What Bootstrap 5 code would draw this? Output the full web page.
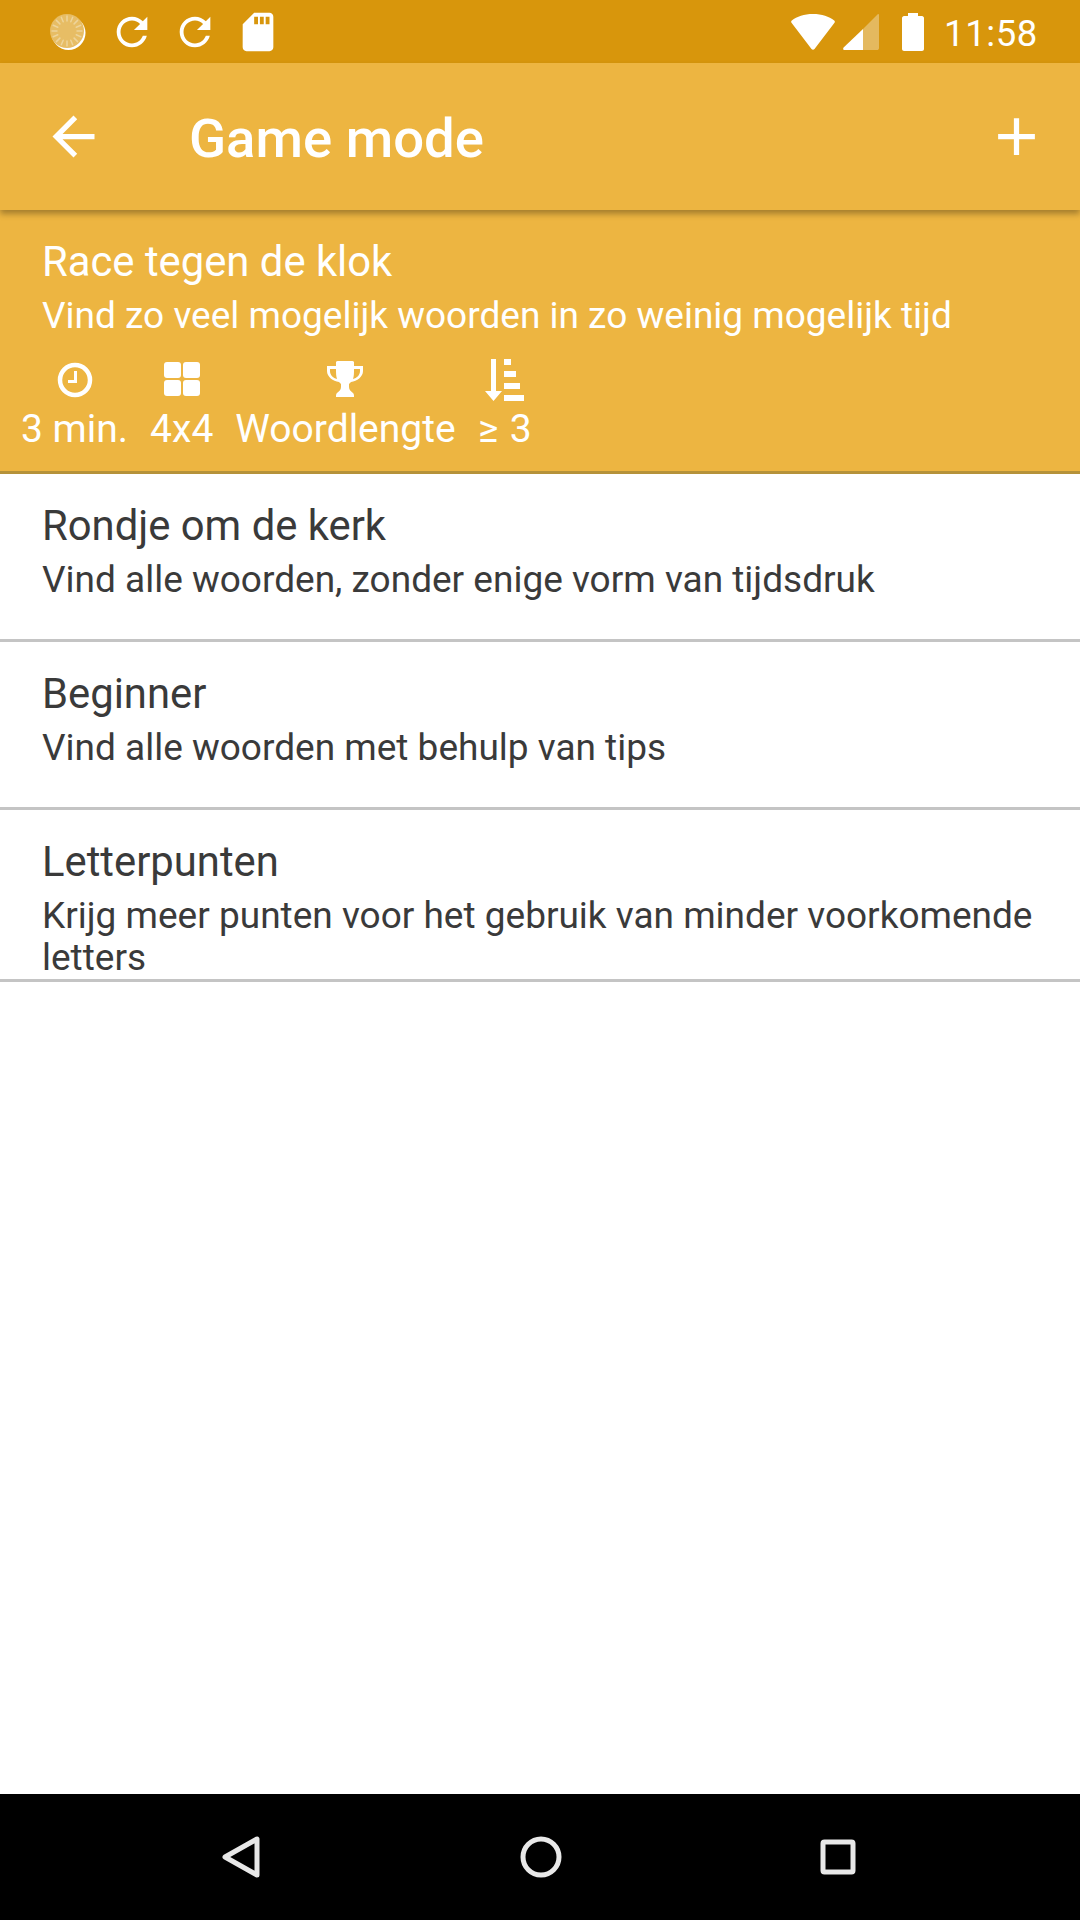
<!DOCTYPE html>
<html lang="en">
<head>
<meta charset="UTF-8" />
<title>Game mode</title>
<link href="https://cdn.jsdelivr.net/npm/bootstrap@5.3.0/dist/css/bootstrap.min.css" rel="stylesheet" />
<style>
  html, body { height: 100%; }
  body { font-family: Roboto, "Liberation Sans", sans-serif; background: #fff; color: #3a3a3a; }
  .screen { height: 1920px; width: 1080px; overflow: hidden; }
  svg { display: block; fill: #fff; }

  .status-strip { height: 63px; background: #d8960c; padding: 0 42px 0 49px; }
  .status-left { gap: 17px; }
  .status-time { font-size: 36.5px; line-height: 63px; color: #fff; letter-spacing: .6px; margin-left: 20px; padding-top: 3px; }
  .spin-dot { margin-right: 5px; }
  .signal-ico { margin-left: 8px; }
  .battery-ico { margin-left: 23px; }

  .app-bar { height: 147px; background: #edb541; padding: 0 32px 0 42px; box-shadow: 0 4px 6px rgba(0,0,0,.3); position: relative; z-index: 2; }
  .app-title { font-size: 54.5px; font-weight: 500; color: #fff; margin: 4px 0 0 84px; line-height: 1; }

  .mode-row { border-bottom: 3px solid #c4c4c4; padding: 27px 42px 0; height: 168px; }
  .mode-row.tall { height: 172px; }
  .mode-row.active { background: #edb541; color: #fff; height: 264px; border-bottom-color: #b5923a; padding-top: 27px; }
  .mode-name { font-size: 41.8px; line-height: 50px; font-weight: 400; margin: 0; }
  .mode-desc { font-size: 37px; line-height: 42px; margin: 8px 0 0; }
  .stat-row { gap: 22px; margin: 21px 0 0 -21px; }
  .stat-item { font-size: 39px; line-height: 44px; }
  .stat-icon { height: 44px; margin-bottom: 5px; }
  .stat-gte { word-spacing: 2px; }

  .nav-strip { height: 126px; background: #000; padding: 0 224px 0 221px; margin-top: auto; }
  .nav-strip svg { fill: none; stroke: #e8e8e8; stroke-width: 5; stroke-linejoin: round; }
</style>
</head>
<body>
<div class="screen d-flex flex-column">

  <!-- status bar -->
  <div class="status-strip d-flex align-items-center justify-content-between">
    <div class="status-left d-flex align-items-center">
      <svg class="spin-dot" width="38" height="38" viewBox="0 0 38 38">
        <circle cx="19.5" cy="20" r="17" fill="#fff"/>
        <circle cx="18" cy="18" r="17" fill="#e7bd65"/>
        <g stroke="#eed49a" stroke-width="1.500" stroke-linecap="round">
          <path d="M18 3v5M18 28v5M3 18h5M28 18h5M7.4 7.4l3.5 3.5M25.1 25.1l3.5 3.5M7.4 28.6l3.5-3.5M25.1 10.9l3.5-3.5M12.3 4.2l1.9 4.6M21.8 27.2l1.9 4.6M4.2 23.7l4.6-1.9M27.2 14.2l4.6-1.9M4.2 12.3l4.6 1.9M27.2 21.8l4.6 1.9M12.3 31.8l1.9-4.6M21.8 8.8l1.9-4.6"/>
        </g>
      </svg>
      <svg width="46" height="46" viewBox="0 0 24 24"><path d="M17.65 6.35C16.2 4.9 14.21 4 12 4c-4.42 0-7.99 3.58-7.99 8s3.57 8 7.99 8c3.73 0 6.84-2.55 7.73-6h-2.08c-.82 2.33-3.04 4-5.65 4-3.31 0-6-2.69-6-6s2.69-6 6-6c1.66 0 3.14.69 4.22 1.78L13 11h7V4l-2.35 2.35z"/></svg>
      <svg width="46" height="46" viewBox="0 0 24 24"><path d="M17.65 6.35C16.2 4.9 14.21 4 12 4c-4.42 0-7.99 3.58-7.99 8s3.57 8 7.99 8c3.73 0 6.84-2.55 7.73-6h-2.08c-.82 2.33-3.04 4-5.65 4-3.31 0-6-2.69-6-6s2.69-6 6-6c1.66 0 3.14.69 4.22 1.78L13 11h7V4l-2.35 2.35z"/></svg>
      <svg width="46" height="46" viewBox="0 0 24 24"><path d="M18 2h-8L4.02 8 4 20c0 1.1.9 2 2 2h12c1.1 0 2-.9 2-2V4c0-1.1-.9-2-2-2zm-6 6h-2V4h2v4zm3 0h-2V4h2v4zm3 0h-2V4h2v4z"/></svg>
    </div>
    <div class="d-flex align-items-center">
      <svg width="44" height="36" viewBox="0 0 44 36"><path d="M22 0C13 0 6 2.500 .8 6.500c-.8.600-.8 1.500-.3 2.200L20.500 35c.8 1 2.200 1 3 0L43.500 8.700c.5-.7.500-1.600-.3-2.200C38 2.500 31 0 22 0z"/></svg>
      <svg class="signal-ico" width="36" height="36" viewBox="0 0 36 36"><path d="M35 0 20 15v21h14c1 0 2-.5 2-2V1c0-1-.5-1-1-1z" fill="#e4b95f"/><path d="M20 15 .6 33.500c-.8 1-.5 2.500 1 2.500H20z"/></svg>
      <svg class="battery-ico" width="22" height="38" viewBox="0 0 22 38"><path d="M6 0h10v3h4c1 0 2 1 2 2v31c0 1-1 2-2 2H2c-1 0-2-1-2-2V5c0-1 1-2 2-2h4z"/></svg>
      <span class="status-time">11:58</span>
    </div>
  </div>

  <!-- app bar -->
  <div class="app-bar d-flex align-items-center">
    <svg width="63" height="63" viewBox="0 0 24 24"><path d="M20 11H7.830l5.590-5.590L12 4l-8 8 8 8 1.410-1.410L7.830 13H20v-2z"/></svg>
    <h1 class="app-title flex-grow-1">Game mode</h1>
    <svg width="63" height="63" viewBox="0 0 24 24"><path d="M19 13h-6v6h-2v-6H5v-2h6V5h2v6h6v2z"/></svg>
  </div>

  <!-- modes -->
  <div class="mode-row active">
    <h2 class="mode-name">Race tegen de klok</h2>
    <p class="mode-desc">Vind zo veel mogelijk woorden in zo weinig mogelijk tijd</p>
    <div class="stat-row d-flex">
      <div class="stat-item d-flex flex-column align-items-center">
        <div class="stat-icon d-flex align-items-center"><svg width="36" height="38" viewBox="0 0 36 38"><circle cx="18" cy="19" r="15" fill="none" stroke="#fff" stroke-width="4.500"/><path d="M20 10v12h-9v-3h6v-9z"/></svg></div>
        <span>3 min.</span>
      </div>
      <div class="stat-item d-flex flex-column align-items-center">
        <div class="stat-icon d-flex align-items-center"><svg width="36" height="38" viewBox="0 0 36 38"><rect y="1" width="17" height="16" rx="3"/><rect x="19" y="1" width="17" height="16" rx="3"/><rect y="19" width="17" height="16" rx="3"/><rect x="19" y="19" width="17" height="16" rx="3"/></svg></div>
        <span>4x4</span>
      </div>
      <div class="stat-item d-flex flex-column align-items-center">
        <div class="stat-icon d-flex align-items-center"><svg width="36" height="38" viewBox="0 0 36 38"><path d="M9 1c0-.5 1-1 3-1h12c2 0 3 .5 3 1v4h9v5c0 6-6 10-12 11l-2 2v3c0 3 2 4 4 6 1 1 1 2 1 4H9c0-2 0-3 1-4 2-2 4-3 4-6v-3l-2-2C6 20 0 16 0 10V5h9zm0 7H3v2c0 4 3 7 7 8-1-3-1-6-1-10zm18 0c0 4 0 7-1 10 4-1 7-4 7-8V8z"/></svg></div>
        <span>Woordlengte</span>
      </div>
      <div class="stat-item d-flex flex-column align-items-center">
        <div class="stat-icon d-flex align-items-center"><svg width="39" height="42" viewBox="0 0 39 42"><path d="M6 0h5v32h6L8.500 42 0 32h6zM19 0h7v6h-7zM19 12h12v6H19zM19 24h16v6H19zM19 36h20v6H19z"/></svg></div>
        <span class="stat-gte">≥ 3</span>
      </div>
    </div>
  </div>

  <div class="mode-row">
    <h2 class="mode-name">Rondje om de kerk</h2>
    <p class="mode-desc">Vind alle woorden, zonder enige vorm van tijdsdruk</p>
  </div>
  <div class="mode-row">
    <h2 class="mode-name">Beginner</h2>
    <p class="mode-desc">Vind alle woorden met behulp van tips</p>
  </div>
  <div class="mode-row tall">
    <h2 class="mode-name">Letterpunten</h2>
    <p class="mode-desc">Krijg meer punten voor het gebruik van minder voorkomende letters</p>
  </div>

  <!-- navigation bar -->
  <div class="nav-strip d-flex align-items-center justify-content-between">
    <svg width="40" height="44" viewBox="0 0 40 44"><path d="M36 4v36L4 22z"/></svg>
    <svg width="42" height="42" viewBox="0 0 42 42"><circle cx="21" cy="21" r="18"/></svg>
    <svg width="36" height="36" viewBox="0 0 36 36"><rect x="3" y="3" width="30" height="30" rx="1.500"/></svg>
  </div>
</div>
<script src="https://cdn.jsdelivr.net/npm/bootstrap@5.3.0/dist/js/bootstrap.bundle.min.js"></script>
</body>
</html>
